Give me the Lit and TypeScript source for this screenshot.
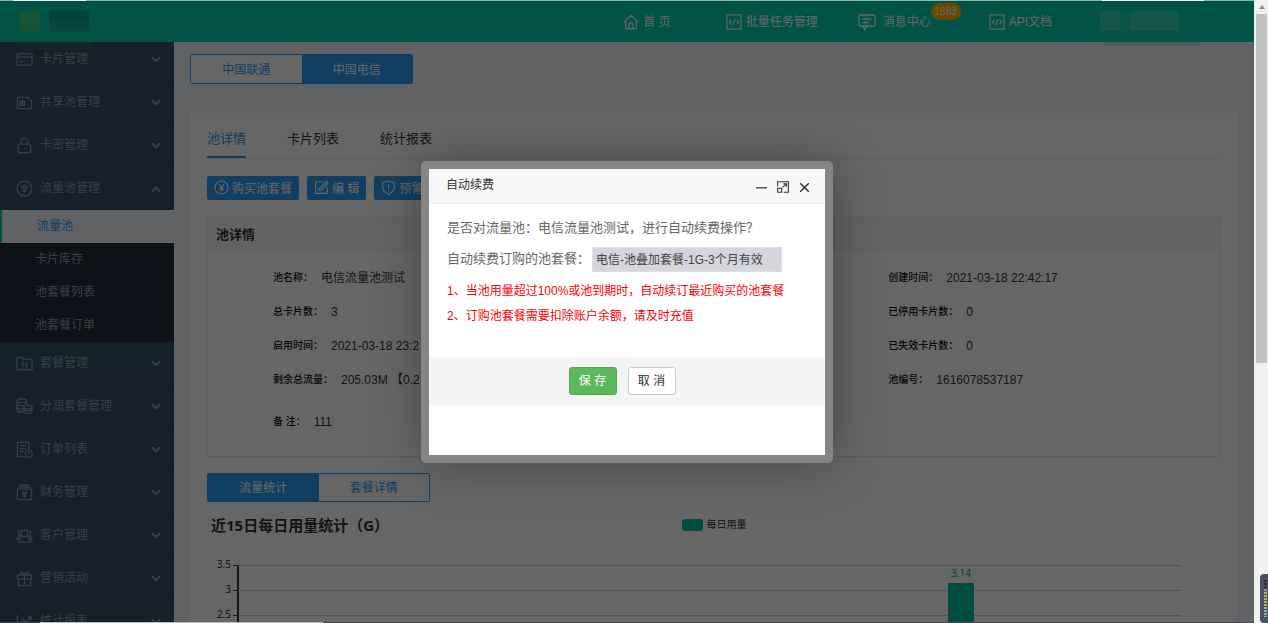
import { LitElement, html, css, svg, nothing } from "lit";
import { customElement, property } from "lit/decorators.js";
import { classMap } from "lit/directives/class-map.js";

const ICONS: Record<string, unknown> = {
  card: svg`<rect x="1" y="3" width="16" height="12" rx="1"/><path d="M1 6.5h16M3.5 11.5h4"/>`,
  sim: svg`<path d="M1.5 3.5h11l4 4v8h-15z"/><path d="M4 7.5h5v4.500H4zM6.500 7.500v4.500M4 9.800h5"/>`,
  lock: svg`<rect x="2.500" y="7.500" width="13" height="9" rx="1"/><path d="M5.500 7.500V5a3.500 3.500 0 0 1 7 0v2.500M9 11.500v1.500"/>`,
  wifi: svg`<circle cx="9" cy="9" r="7.800"/><path d="M4.800 7.500q4.200-3.600 8.400 0M6.300 9.300q2.700-2.300 5.400 0M7.600 11q1.400-1.200 2.800 0L9 13z"/>`,
  folder: svg`<path d="M1 15.500v-13h5.500l1.500 2h9v11z"/><path d="M7.300 12.500v-5L5.800 9M10.700 7.500v5l1.500-1.500"/>`,
  coins: svg`<ellipse cx="6" cy="3" rx="5" ry="2"/><path d="M1 3v10.500q2 2 6 1.800M11 3v4M1 6.500q2 2 7 1.600M1 10q2 2 6 1.600M1 13q2 2 6 1.600"/><ellipse cx="12.500" cy="9.500" rx="4.500" ry="2"/><path d="M8 9.500v5.500q4.500 3 9 0V9.500M8 12.300q4.500 3 9 0"/>`,
  order: svg`<path d="M9 16.500H1.500v-15h12V9M4 5h7M4 8h7M4 11h4"/><circle cx="13.500" cy="13.500" r="3.700"/><path d="M13.500 11.500v2h1.800"/>`,
  finance: svg`<path d="M3.500 1.200h11M2.500 3.200h13M1.500 5.500h15v11h-15zM6.500 7.500L9 10.500l2.500-3M9 10.500v4M6.800 11h4.400M6.800 12.800h4.400"/>`,
  users: svg`<circle cx="9" cy="6.500" r="3.500"/><path d="M3 16q0-5 4-6M15 16q0-5-4-6M3 16h12M5 3.500a2.800 2.800 0 0 0-1 5.300Q1 10 1 13.500h2M13 3.500a2.800 2.800 0 0 1 1 5.300q3 1.200 3 4.700h-2"/>`,
  gift: svg`<path d="M1.500 5.500h15v4h-15zM2.500 9.500v7h13v-7M9 5.500v11M9 5.500Q4 5 5 2.500 7 .500 9 5.500 11 .500 13 2.500 14 5 9 5.500"/>`,
  chart: svg`<path d="M1.500 2v14h15M3.500 11l4-4 3 3 5.500-6M12.500 4H16v3.500M5 13.500v1M8 12.500v2M11 13v1.500"/>`,
  home: svg`<path d="M1 9l8-7.500L17 9M3 8v8.500h12V8M6.800 16.500V11q2.200-2 4.400 0v5.500"/>`,
  code: svg`<rect x="1" y="1" width="16" height="16"/><path d="M6 6.500L3.800 9 6 11.500M12 6.500L14.200 9 12 11.500M10.300 5.500l-2.600 7"/>`,
  message: svg`<rect x="1" y="2" width="16" height="11" rx="1.500"/><path d="M5 13l1.500 3.500L9 13M4.500 6h9M4.500 9.500h6"/>`,
  yen: svg`<circle cx="9" cy="9" r="7.800"/><path d="M6 4.800l3 4 3-4M9 8.800v5M6.300 9.200h5.400M6.300 11.300h5.400"/>`,
  edit: svg`<path d="M11 2H2v14h14V7.500M6 12.500l.800-3L15 1.500l2 2-8.200 8.200z"/>`,
  shield: svg`<path d="M9 1.200l7 2v6q-.500 5-7 7.800-6.500-2.800-7-7.800v-6zM9 5v5M9 11.500v1.500"/>`,
  down: svg`<path d="M4.500 7l4.500 4.500L13.500 7" stroke-width="2.400"/>`,
  up: svg`<path d="M4.500 13L9 8.500l4.500 4.500" stroke-width="2.400"/>`,
  minus: svg`<path d="M0 9.500h18" stroke-width="2"/>`,
  expand: svg`<path d="M1 8V1h16v16H10M1 11h6v6H1zM8.500 9.500L14 4M9.500 4H14v4.500" stroke-width="1.600"/>`,
  close: svg`<path d="M2 2l14 14M16 2L2 16" stroke-width="2.400"/>`,
};

const MENU = [
  { icon: "card", text: "卡片管理" },
  { icon: "sim", text: "共享池管理" },
  { icon: "lock", text: "卡密管理" },
  { icon: "wifi", text: "流量池管理", children: ["流量池", "卡片库存", "池套餐列表", "池套餐订单"] },
  { icon: "folder", text: "套餐管理" },
  { icon: "coins", text: "分润套餐管理" },
  { icon: "order", text: "订单列表" },
  { icon: "finance", text: "财务管理" },
  { icon: "users", text: "客户管理" },
  { icon: "gift", text: "营销活动" },
  { icon: "chart", text: "统计报表" },
];

const DETAILS = [
  ["池名称：", "电信流量池测试", "创建时间：", "2021-03-18 22:42:17"],
  ["总卡片数：", "3", "已停用卡片数：", "0"],
  ["启用时间：", "2021-03-18 23:2", "已失效卡片数：", "0"],
  ["剩余总流量：", "205.03M 【0.2", "池编号：", "1616078537187"],
  ["备 注：", "111", "", ""],
];

@customElement("ui-icon")
export class UiIcon extends LitElement {
  @property() name = "";
  static styles = css`
    :host { display: block; flex: none; width: 18px; height: 18px; }
    .glyph { display: block; width: 100%; height: 100%; fill: none; stroke: currentColor; stroke-width: 1.3; }
  `;
  render() {
    return html`<svg class="glyph" viewBox="0 0 18 18" aria-hidden="true">${ICONS[this.name]}</svg>`;
  }
}

@customElement("top-bar")
export class TopBar extends LitElement {
  static styles = css`
    :host {
      display: flex; align-items: center; height: 42px; box-sizing: border-box;
      background: #00cfac; color: #fff; padding: 0 50px 0 20px; position: relative; z-index: 1;
    }
    .logo, .user { display: flex; height: 20px; position: relative; }
    .logo { width: 69px; gap: 9px; }
    .mark { width: 20px; background: #3fd084; }
    .word { width: 40px; background: linear-gradient(#12a493 50%, #14b09c 50%); }
    .logo::after, .user::after {
      content: ""; position: absolute; top: 31px; left: -3px; width: 76px; height: 8px;
      border-radius: 0 0 40px 40px; background: #33606a;
    }
    .nav { display: flex; margin-left: auto; align-items: center; padding-top: 2px; }
    .link {
      display: flex; align-items: center; gap: 4px; color: inherit; text-decoration: none;
      font-size: 12px; line-height: 20px; margin-right: 55px; white-space: nowrap; position: relative;
    }
    .link.msg { gap: 6px; margin-right: 58px; margin-left: -16px; }
    .link.api { margin-right: 48px; }
    .link ui-icon { width: 16px; height: 16px; }
    .msg ui-icon { width: 20px; height: 18px; }
    .badge {
      position: absolute; left: 100%; bottom: 12px; background: #ffb800; border-radius: 9px;
      width: 30px; font-size: 10px; line-height: 17px; text-align: center;
    }
    .user { width: 104px; }
    .name { width: 79px; background: linear-gradient(90deg, #3fd9bd 20px, #1fd4b4 20px 30px, #3fd9bd 30px); opacity: .8; }
    .user::after { left: 4px; width: 96px; height: 4px; background: #cfe0e2; }
  `;
  render() {
    return html`
      <div class="logo"><span class="mark"></span><span class="word"></span></div>
      <nav class="nav">
        <a class="link" href="#"><ui-icon name="home"></ui-icon>首 页</a>
        <a class="link" href="#"><ui-icon name="code"></ui-icon>批量任务管理</a>
        <a class="link msg" href="#"><ui-icon name="message"></ui-icon>消息中心<span class="badge">1883</span></a>
        <a class="link api" href="#"><ui-icon name="code"></ui-icon>API文档</a>
      </nav>
      <div class="user"><span class="name"></span></div>
    `;
  }
}

@customElement("side-menu")
export class SideMenu extends LitElement {
  static styles = css`
    :host { display: block; width: 174px; flex: none; overflow: hidden; background: #395069; color: #8d9cae; font-size: 12px; }
    .list { margin-top: -4px; }
    .item {
      display: flex; align-items: center; gap: 7px; width: 100%; height: 43px; box-sizing: border-box;
      padding: 0 10px 0 16px; border: 0; border-bottom: 1px solid #324760; background: none;
      color: inherit; font: inherit; text-align: left;
    }
    .item ui-icon { width: 17px; height: 17px; }
    .label { flex: 1; padding-bottom: 3px; }
    .item .arrow { width: 16px; height: 16px; }
    .sub { display: block; height: 33px; line-height: 33px; padding-left: 35px; background: #232f3e; color: inherit; text-decoration: none; }
    .sub.active { background: #f0f4fa; color: #2d9ef2; border-left: 2px solid #00cfac; }
  `;
  render() {
    return html`<nav class="list">
      ${MENU.map((m) => html`
        <button class="item" type="button">
          <ui-icon name=${m.icon}></ui-icon><span class="label">${m.text}</span>
          <ui-icon class="arrow" name=${m.children ? "up" : "down"}></ui-icon>
        </button>
        ${m.children?.map((c, i) => html`<a href="#" class=${classMap({ sub: true, active: i === 0 })}>${c}</a>`) ?? nothing}
      `)}
    </nav>`;
  }
}

@customElement("usage-chart")
export class UsageChart extends LitElement {
  static styles = css`
    :host { display: block; color: #333; }
    .head { display: grid; grid-template-columns: 1fr auto 1fr; align-items: center; }
    .title { margin: 0; padding-left: 4px; font: bold 15px/24px "Noto Sans", "Noto Sans CJK SC", sans-serif; }
    .legend { display: flex; align-items: center; gap: 4px; font-size: 10px; line-height: 12px; }
    .swatch { width: 21px; height: 12px; border-radius: 3px; background: #00bea0; }
    .body { margin: 28px 40px 0 0; position: relative; }
    .row { display: grid; grid-template-columns: 24px 6px 1fr; height: 25px; }
    .tick { font: 10px/12px "Noto Sans", sans-serif; text-align: right; margin-top: -7px; }
    .dash { border-top: 1px solid #333; margin-left: 2px; }
    .line { border-top: 1px solid #ccc; border-left: 2px solid #333; }
    .bars { position: absolute; inset: 0 0 0 31px; display: grid; grid-template-columns: repeat(15, 1fr); }
    .bar { grid-column: 12; width: 26px; justify-self: center; margin-top: 18px; background: #00bea0; position: relative; }
    .value { position: absolute; bottom: 100%; left: 0; right: 0; text-align: center; color: #00bea0; font: 10px/20px "Noto Sans", sans-serif; }
  `;
  render() {
    return html`
      <div class="head">
        <h2 class="title">近15日每日用量统计（G）</h2>
        <div class="legend"><span class="swatch"></span>每日用量</div>
      </div>
      <div class="body">
        ${["3.5", "3", "2.5"].map((v) => html`<div class="row"><span class="tick">${v}</span><span class="dash"></span><span class="line"></span></div>`)}
        <div class="bars"><div class="bar"><span class="value">3.14</span></div></div>
      </div>
    `;
  }
}

@customElement("pool-page")
export class PoolPage extends LitElement {
  static styles = css`
    :host { display: block; flex: 1; min-width: 0; background: #f0f4fa; padding: 12px 16px 0; overflow: hidden; color: #333; }
    .switch { display: flex; width: 223px; height: 30px; box-sizing: border-box; border: 1px solid #2d9ef2; border-radius: 2px; }
    .switch.low { height: 29px; margin-top: 16px; }
    .opt { flex: 1; border: 0; padding: 0 0 2px; background: #fff; color: #2d9ef2; font: inherit; font-size: 12px; }
    .opt.on { background: #2d9ef2; color: #fff; }
    .panel { margin-top: 29px; background: #fff; padding: 0 17px; }
    .tabs { display: flex; gap: 41px; border-bottom: 1px solid #eee; }
    .tab { border: 0; border-bottom: 2px solid transparent; background: none; padding: 16px 0 7px; font: inherit; font-size: 13px; line-height: 20px; color: #333; }
    .tab.on { color: #2d9ef2; border-color: #2d9ef2; }
    .tools { display: flex; gap: 8px; margin: 17px 0 16px; }
    .tool {
      display: flex; align-items: center; gap: 3px; height: 24px; border: 0; border-radius: 2px;
      padding: 0 7px 1px; background: #2d9ef2; color: #fff; font: inherit; font-size: 12px; white-space: nowrap;
    }
    .tool ui-icon { width: 15px; height: 15px; }
    .card { border: 1px solid #e6ebf0; }
    .cardhead { margin: 0; height: 36px; line-height: 36px; padding-left: 8px; background: #f3f7fc; font-size: 13px; }
    .rows { margin: 0; padding: 8px 24px 9px 65px; }
    .row { display: grid; grid-template-columns: 2fr 1fr; height: 34px; align-items: center; white-space: nowrap; }
    .row:last-child { height: 50px; }
    .pair { display: flex; align-items: center; gap: 8px; }
    .key { font-size: 10px; font-weight: 500; color: #111; line-height: 18px; }
    .val { margin: 0; font-size: 12px; line-height: 18px; }
    usage-chart { margin-top: 11px; }
  `;
  private pair(k: string, v: string) {
    return k ? html`<div class="pair"><dt class="key">${k}</dt><dd class="val">${v}</dd></div>` : nothing;
  }
  render() {
    return html`
      <div class="switch">
        <button class="opt" type="button">中国联通</button><button class="opt on" type="button">中国电信</button>
      </div>
      <section class="panel">
        <div class="tabs">
          <button class="tab on" type="button">池详情</button>
          <button class="tab" type="button">卡片列表</button>
          <button class="tab" type="button">统计报表</button>
        </div>
        <div class="tools">
          <button class="tool" type="button"><ui-icon name="yen"></ui-icon>购买池套餐</button>
          <button class="tool" type="button"><ui-icon name="edit"></ui-icon>编 辑</button>
          <button class="tool" type="button"><ui-icon name="shield"></ui-icon>预警</button>
        </div>
        <div class="card">
          <h3 class="cardhead">池详情</h3>
          <dl class="rows">
            ${DETAILS.map(([a, b, c, d]) => html`<div class="row">${this.pair(a, b)}${this.pair(c, d)}</div>`)}
          </dl>
        </div>
        <div class="switch low">
          <button class="opt on" type="button">流量统计</button><button class="opt" type="button">套餐详情</button>
        </div>
        <usage-chart></usage-chart>
      </section>
    `;
  }
}

@customElement("renew-dialog")
export class RenewDialog extends LitElement {
  static styles = css`
    :host { display: block; width: 396px; border: 8px solid #858585; border-radius: 5px; background: #fff; box-shadow: 1px 1px 50px rgba(0, 0, 0, .3); }
    .head { display: flex; align-items: center; gap: 10px; height: 35px; box-sizing: border-box; padding: 0 15px 0 17px; background: #f7f7f7; border-bottom: 1px solid #eee; color: #333; }
    .title { margin: 0 auto 0 0; font-size: 12px; font-weight: normal; line-height: 35px; }
    .ctl { border: 0; padding: 0; background: none; color: #2e2d3c; margin-top: 3px; }
    .ctl ui-icon { width: 11px; height: 11px; }
    .ctl .big { width: 12px; height: 12px; }
    .body { padding: 14px 18px 28px; color: #666; font-size: 13px; line-height: 20px; white-space: nowrap; }
    .text, .note { margin: 0; }
    .field { display: flex; align-items: center; gap: 2px; margin: 9px 0 7px; }
    .input { width: 190px; height: 25px; box-sizing: border-box; border: 1px solid #dcdce4; padding: 0 3px 2px; background: #d5d5de; color: #444; font: inherit; font-size: 12px; }
    .note { color: #f00; font-size: 12px; line-height: 25px; }
    .foot { display: flex; justify-content: center; gap: 11px; padding: 10px 10px 10px 0; background: #f4f4f4; margin-bottom: 50px; }
    .btn { width: 48px; height: 28px; box-sizing: border-box; padding: 0 0 2px; border: 1px solid #ccc; border-radius: 3px; background: #fff; color: #333; font: inherit; font-size: 12px; }
    .btn.save { background: #5cb85c; border-color: #4cae4c; color: #fff; }
  `;
  render() {
    return html`
      <header class="head">
        <h2 class="title">自动续费</h2>
        <button class="ctl" type="button" aria-label="最小化"><ui-icon name="minus"></ui-icon></button>
        <button class="ctl" type="button" aria-label="最大化"><ui-icon class="big" name="expand"></ui-icon></button>
        <button class="ctl" type="button" aria-label="关闭"><ui-icon name="close"></ui-icon></button>
      </header>
      <div class="body">
        <p class="text">是否对流量池：电信流量池测试，进行自动续费操作？</p>
        <div class="field">
          <label for="plan">自动续费订购的池套餐：</label>
          <input id="plan" class="input" readonly value="电信-池叠加套餐-1G-3个月有效" />
        </div>
        <p class="note">1、当池用量超过100%或池到期时，自动续订最近购买的池套餐</p>
        <p class="note">2、订购池套餐需要扣除账户余额，请及时充值</p>
      </div>
      <footer class="foot">
        <button class="btn save" type="button">保 存</button>
        <button class="btn" type="button">取 消</button>
      </footer>
    `;
  }
}

@customElement("app-root")
export class AppRoot extends LitElement {
  static styles = css`
    :host { display: flex; height: 100vh; overflow: hidden; font-family: "Liberation Sans", "Noto Sans CJK SC", sans-serif; }
    .view { flex: 1; min-width: 0; display: flex; flex-direction: column; position: relative; }
    .main { flex: 1; min-height: 0; display: flex; }
    .shade { position: absolute; inset: 0; z-index: 2; display: flex; align-items: center; justify-content: center; background: rgba(0, 0, 0, .6); }
    .edge { position: absolute; left: 0; right: 0; height: 1px; z-index: 3; }
    .edge.top { top: 0; background: linear-gradient(90deg, #8fb5ae 13px, #fff 13px 86px, #8fb5ae 86px 1102px, #fff 1102px 1204px, #8fb5ae 1204px); }
    .edge.bottom { bottom: 0; background: linear-gradient(90deg, #37404e 40px, #bbb 40px 323px, #454a58 323px); }
    .scroll { width: 14px; box-sizing: border-box; padding: 0 1px 0 2px; background: #f1f1f1; position: relative; }
    .up { height: 14px; display: grid; place-items: center; }
    .up::before { content: ""; border: 3px solid transparent; border-top: 0; border-bottom: 4px solid #8a8a8a; }
    .thumb { height: 56%; background: #c1c1c1; }
    .meter {
      position: absolute; right: 0; bottom: 0; width: 8px; height: 49px; box-sizing: border-box; padding: 6px 1px 6px 4px;
      background: #4b5062; border-radius: 4px 0 0 4px;
    }
    .level { height: 100%; background: repeating-linear-gradient(transparent 0 2px, #4b5062 2px 3px), linear-gradient(#2d303c 25%, #d0a040 26%, #b5c050 50%, #50c0a0); }
  `;
  render() {
    return html`
      <div class="view">
        <top-bar></top-bar>
        <div class="main"><side-menu></side-menu><pool-page></pool-page></div>
        <div class="shade"><renew-dialog role="dialog" aria-label="自动续费"></renew-dialog></div>
        <div class="edge top"></div>
        <div class="edge bottom"></div>
      </div>
      <div class="scroll"><div class="up"></div><div class="thumb"></div><div class="meter"><div class="level"></div></div></div>
    `;
  }
}
